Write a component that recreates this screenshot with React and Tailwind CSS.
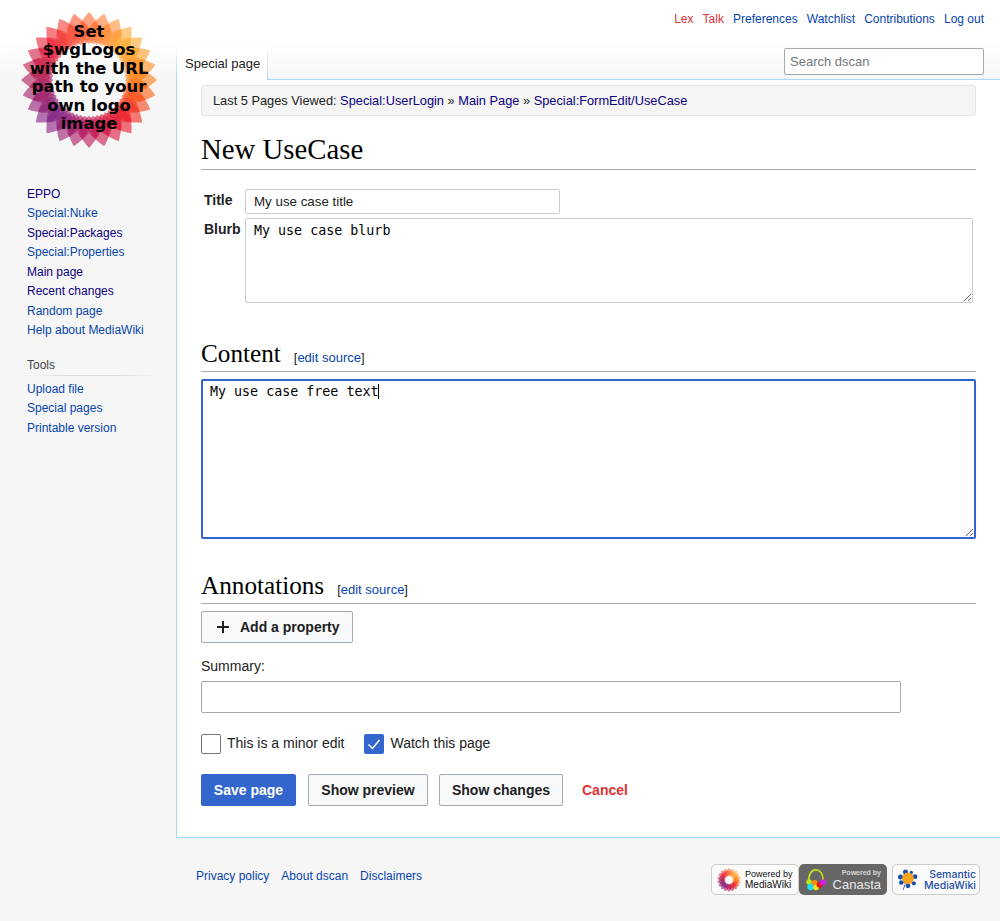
import React from "react";

const navMain = [
  ["EPPO", true],
  ["Special:Nuke", false],
  ["Special:Packages", true],
  ["Special:Properties", false],
  ["Main page", true],
  ["Recent changes", true],
  ["Random page", false],
  ["Help about MediaWiki", false],
];

const navTools = ["Upload file", "Special pages", "Printable version"];

const personal = [
  ["Lex", true],
  ["Talk", true],
  ["Preferences", false],
  ["Watchlist", false],
  ["Contributions", false],
  ["Log out", false],
];

// colour of a petal, going clockwise from the top
const stops = [
  [255, 106, 50],
  [255, 178, 60],
  [255, 128, 20],
  [240, 30, 40],
  [190, 25, 90],
  [130, 35, 135],
  [175, 30, 90],
  [240, 40, 60],
  [255, 106, 50],
];

const petalColor = (t) => {
  const p = t * (stops.length - 1);
  const i = Math.floor(p);
  const f = p - i;
  const a = stops[i];
  const b = stops[Math.min(i + 1, stops.length - 1)];
  return `rgb(${a.map((v, k) => Math.round(v + (b[k] - v) * f)).join(",")})`;
};

const Flower = ({ className, count = 28, dense = false }) => {
  const outer = dense
    ? "M68 46 C50 30 52 16 68 0 C84 16 86 30 68 46 Z"
    : "M68 32 C55 22 56 13 68 0 C80 13 81 22 68 32 Z";
  const inner = dense
    ? "M68 46 C54 36 56 24 68 12 C80 24 82 36 68 46 Z"
    : "M68 32 C58 25 59 17 68 8 C77 17 78 25 68 32 Z";
  return (
    <svg viewBox="0 0 136 136" className={className}>
      {Array.from({ length: count }).map((_, i) => (
        <path
          key={i}
          d={outer}
          fill={petalColor(i / count)}
          opacity="0.62"
          transform={`rotate(${(i * 360) / count} 68 68)`}
        />
      ))}
      {Array.from({ length: count }).map((_, i) => (
        <path
          key={i}
          d={inner}
          fill={petalColor((i + 0.5) / count)}
          opacity="0.6"
          transform={`rotate(${((i + 0.5) * 360) / count} 68 68)`}
        />
      ))}
    </svg>
  );
};

const Logo = () => (
  <div className="relative h-[160px]">
    <Flower className="absolute left-[21px] top-[12px] w-[136px] h-[136px]" />
    <div className="absolute left-[9px] top-[22.5px] w-[160px] text-center font-['DejaVu_Sans',sans-serif] font-bold text-[16.4px] leading-[18.5px] text-black">
      Set
      <br />
      $wgLogos
      <br />
      with the URL
      <br />
      path to your
      <br />
      own logo
      <br />
      image
    </div>
  </div>
);

const Sidebar = () => (
  <div className="w-[176px] shrink-0">
    <Logo />
    <ul className="mt-[24.5px] pl-[27px] text-[12px] leading-[19.5px]">
      {navMain.map(([label, visited]) => (
        <li key={label} className={visited ? "text-[#0b0080]" : "text-[#0645ad]"}>
          {label}
        </li>
      ))}
    </ul>
    <div className="mt-[15.3px] ml-[27px] w-[130px] h-[20px] text-[12px] leading-[19px] text-[#444] bg-[linear-gradient(to_right,transparent,#d8dadd_30%,#d8dadd_70%,transparent)] bg-[length:100%_1px] bg-bottom bg-no-repeat">
      Tools
    </div>
    <ul className="mt-[4px] pl-[27px] text-[12px] leading-[19.5px] text-[#0645ad]">
      {navTools.map((label) => (
        <li key={label}>{label}</li>
      ))}
    </ul>
  </div>
);

const Header = () => (
  <div className="h-[80px]">
    <div className="h-[44px] flex justify-end gap-[9.1px] pt-[11px] pr-[16px] text-[12px] leading-[16px]">
      {personal.map(([label, red]) => (
        <span key={label} className={red ? "text-[#dd3333]" : "text-[#0645ad]"}>
          {label}
        </span>
      ))}
    </div>
    <div className="relative z-10 h-[36px] flex">
      <div className="w-px bg-[linear-gradient(#ffffff,#a7d7f9)]" />
      <div className="w-[90px] pl-[8px] pt-[12px] text-[13px] leading-[16px] text-[#222] bg-white">
        Special page
      </div>
      <div className="w-px h-[35px] bg-[linear-gradient(#ffffff,#a7d7f9)]" />
      <div className="ml-auto mr-[16px] mt-[4px]">
        <input
          readOnly
          placeholder="Search dscan"
          className="block w-[200px] h-[27px] px-[5px] text-[13px] bg-white border border-[#a2a9b1] rounded-[2px] placeholder:text-[#72777d] outline-none"
        />
      </div>
    </div>
  </div>
);

const SectionHeading = ({ title, gap }) => (
  <div className={`flex items-baseline pb-[3px] border-b border-[#a2a9b1] ${gap}`}>
    <h2 className="font-['Liberation_Serif',serif] text-[25.2px] leading-[29px] text-black">
      {title}
    </h2>
    <span className="ml-[13px] text-[13px] text-[#222]">
      [<span className="text-[#0645ad]">edit source</span>]
    </span>
  </div>
);

const Checkbox = ({ checked, label }) => (
  <label className="flex items-center gap-[6px]">
    {checked ? (
      <span className="w-[20px] h-[20px] rounded-[2px] bg-[#3366cc] flex items-center justify-center">
        <svg viewBox="0 0 20 20" className="w-[20px] h-[20px]">
          <path d="M4.5 10.5 L8.5 14.5 L15.5 6" fill="none" stroke="#fff" strokeWidth="1.5" />
        </svg>
      </span>
    ) : (
      <span className="w-[20px] h-[20px] rounded-[2px] bg-white border border-[#72777d]" />
    )}
    <span className="text-[14px] text-[#222]">{label}</span>
  </label>
);

const Button = ({ children, className }) => (
  <button className={`h-[32px] rounded-[2px] border text-[14px] font-bold ${className}`}>
    {children}
  </button>
);

const Content = () => (
  <div className="bg-white border-y border-l border-[#a7d7f9] pl-[24px] pr-[24px] pb-[31px]">
    <div className="mt-[5px] h-[31px] px-[11px] flex items-center bg-[#f5f5f5] border border-[#e5e5e5] rounded-[3px] text-[12.8px] text-[#222]">
      <span>
        Last 5 Pages Viewed: <span className="text-[#0b0080]">Special:UserLogin</span> »{" "}
        <span className="text-[#0b0080]">Main Page</span> »{" "}
        <span className="text-[#0b0080]">Special:FormEdit/UseCase</span>
      </span>
    </div>
    <h1 className="mt-[16px] pb-[3px] border-b border-[#a2a9b1] font-['Liberation_Serif',serif] text-[28.8px] leading-[34px] text-black">
      New UseCase
    </h1>

    <div className="mt-[19px] flex">
      <label className="w-[44px] pl-[3px] pt-[2px] text-[14px] font-bold leading-[18px] text-[#222]">
        Title
      </label>
      <input
        readOnly
        defaultValue="My use case title"
        className="w-[315px] h-[25px] pl-[8px] text-[13.33px] text-[#222] border border-[#c8ccd1] rounded-[2px] outline-none"
      />
    </div>
    <div className="mt-[4px] flex">
      <label className="w-[44px] pl-[3px] pt-[2px] text-[14px] font-bold leading-[18px] text-[#222]">
        Blurb
      </label>
      <textarea
        readOnly
        defaultValue="My use case blurb"
        className="block w-[728px] h-[85px] pl-[8px] pt-[4px] font-['DejaVu_Sans_Mono',monospace] text-[13.33px] leading-[16px] text-black border border-[#c8ccd1] rounded-[2px] outline-none"
      />
    </div>

    <SectionHeading title="Content" gap="mt-[36px]" />
    <div className="relative mt-[7px]">
      <textarea
        readOnly
        defaultValue="My use case free text"
        className="block w-full h-[160px] pl-[7px] pt-[3px] font-['DejaVu_Sans_Mono',monospace] text-[13.33px] leading-[16px] text-black border-2 border-[#3366cc] rounded-[2px] outline-none"
      />
      <span className="absolute left-[177px] top-[5px] w-px h-[15px] bg-black" />
    </div>

    <SectionHeading title="Annotations" gap="mt-[32px]" />
    <Button className="mt-[7px] w-[152px] flex items-center pl-[15px] bg-[#f8f9fa] border-[#a2a9b1] text-[#202122]">
      <svg viewBox="0 0 12 12" className="w-[12px] h-[12px] shrink-0">
        <path d="M6 0V12M0 6H12" fill="none" stroke="#202122" strokeWidth="2" />
      </svg>
      <span className="ml-[11px]">Add a property</span>
    </Button>

    <div className="mt-[14px] text-[14px] leading-[18px] text-[#222]">Summary:</div>
    <input
      readOnly
      className="block mt-[6px] w-[700px] h-[32px] bg-white border border-[#a2a9b1] rounded-[2px] outline-none"
    />

    <div className="mt-[20px] flex gap-[20px]">
      <Checkbox label="This is a minor edit" />
      <Checkbox checked label="Watch this page" />
    </div>

    <div className="mt-[20px] flex items-center">
      <Button className="w-[95px] bg-[#3366cc] border-[#3366cc] text-white">Save page</Button>
      <Button className="ml-[12px] w-[120px] bg-[#f8f9fa] border-[#a2a9b1] text-[#202122]">
        Show preview
      </Button>
      <Button className="ml-[11px] w-[124px] bg-[#f8f9fa] border-[#a2a9b1] text-[#202122]">
        Show changes
      </Button>
      <span className="ml-[19px] text-[14px] font-bold text-[#dd3333]">Cancel</span>
    </div>
  </div>
);

const Badges = () => (
  <div className="flex items-center">
    <div className="w-[88px] h-[31px] flex items-center pl-[5px] bg-[#fbfbfb] border border-[#cccccc] rounded-[5px]">
      <Flower dense count={18} className="w-[24px] h-[24px] shrink-0" />
      <div className="ml-[4px] text-[#111] whitespace-nowrap">
        <div className="text-[9px] leading-[10px]">Powered by</div>
        <div className="text-[10px] leading-[11px] font-medium">MediaWiki</div>
      </div>
    </div>
    <div className="w-[88px] h-[31px] flex items-center pl-[7px] pr-[6px] bg-[#666666] rounded-[5px] text-[#e8e8e8]">
      <svg viewBox="0 0 20 22" className="w-[20px] h-[22px] shrink-0">
        <path d="M3 13 C1 -3 18 -3 17 12" fill="none" stroke="#c6e21a" strokeWidth="1.6" />
        <circle cx="3" cy="13" r="2.8" fill="#b7ea1a" />
        <circle cx="8.5" cy="14" r="3" fill="#ff8a14" />
        <circle cx="4.5" cy="18" r="3.2" fill="#1ce0ee" />
        <circle cx="10" cy="18.5" r="2.8" fill="#f7e51a" />
        <circle cx="13.5" cy="16" r="2.8" fill="#f01414" />
        <circle cx="17" cy="13.5" r="3" fill="#d41fe0" />
      </svg>
      <div className="ml-auto text-right whitespace-nowrap">
        <div className="text-[7px] leading-[10px] font-bold text-[#d8d8d8]">Powered by</div>
        <div className="text-[13px] leading-[14px] font-medium">Canasta</div>
      </div>
    </div>
    <div className="ml-[5px] w-[88px] h-[31px] flex items-center pl-[5px] bg-[#fbfbfb] border border-[#cccccc] rounded-[5px]">
      <svg viewBox="0 0 24 26" className="w-[20px] h-[24px] shrink-0">
        <path d="M6 25 C8 20 9 17 9 14" fill="none" stroke="#1c4fa8" strokeWidth="1" />
        <circle cx="9" cy="3.5" r="3" fill="#1c4fa8" />
        <circle cx="16" cy="4" r="2" fill="#1c4fa8" />
        <circle cx="20.5" cy="9" r="2.8" fill="#1c4fa8" />
        <circle cx="19" cy="17" r="2.5" fill="#1c4fa8" />
        <circle cx="12" cy="20" r="2.8" fill="#1c4fa8" />
        <circle cx="4" cy="16" r="2.8" fill="#1c4fa8" />
        <circle cx="3" cy="9.5" r="3" fill="#1c4fa8" />
        <circle cx="12" cy="11" r="7" fill="#f5a21d" />
      </svg>
      <div className="ml-auto pr-[3px] text-right font-['Inter',sans-serif] font-medium text-[10.5px] leading-[11px] text-[#1c4fa8] whitespace-nowrap">
        Semantic
        <br />
        MediaWiki
      </div>
    </div>
  </div>
);

const Footer = () => (
  <div className="ml-[176px] pl-[20px] pr-[20px] pt-[26px] flex justify-between items-start text-[12px] text-[#0645ad]">
    <div className="flex gap-[12px] mt-[3px]">
      <span>Privacy policy</span>
      <span>About dscan</span>
      <span>Disclaimers</span>
    </div>
    <Badges />
  </div>
);

export default function App() {
  return (
    <div className="min-h-[921px] overflow-hidden bg-[#f6f6f6] bg-[linear-gradient(#ffffff_50%,#f6f6f6_100%)] bg-[length:100%_80px] bg-no-repeat font-['Liberation_Sans',sans-serif]">
      <div className="flex">
        <Sidebar />
        <div className="flex-1 min-w-0">
          <Header />
          <div className="-mt-px">
            <Content />
          </div>
        </div>
      </div>
      <Footer />
    </div>
  );
}
